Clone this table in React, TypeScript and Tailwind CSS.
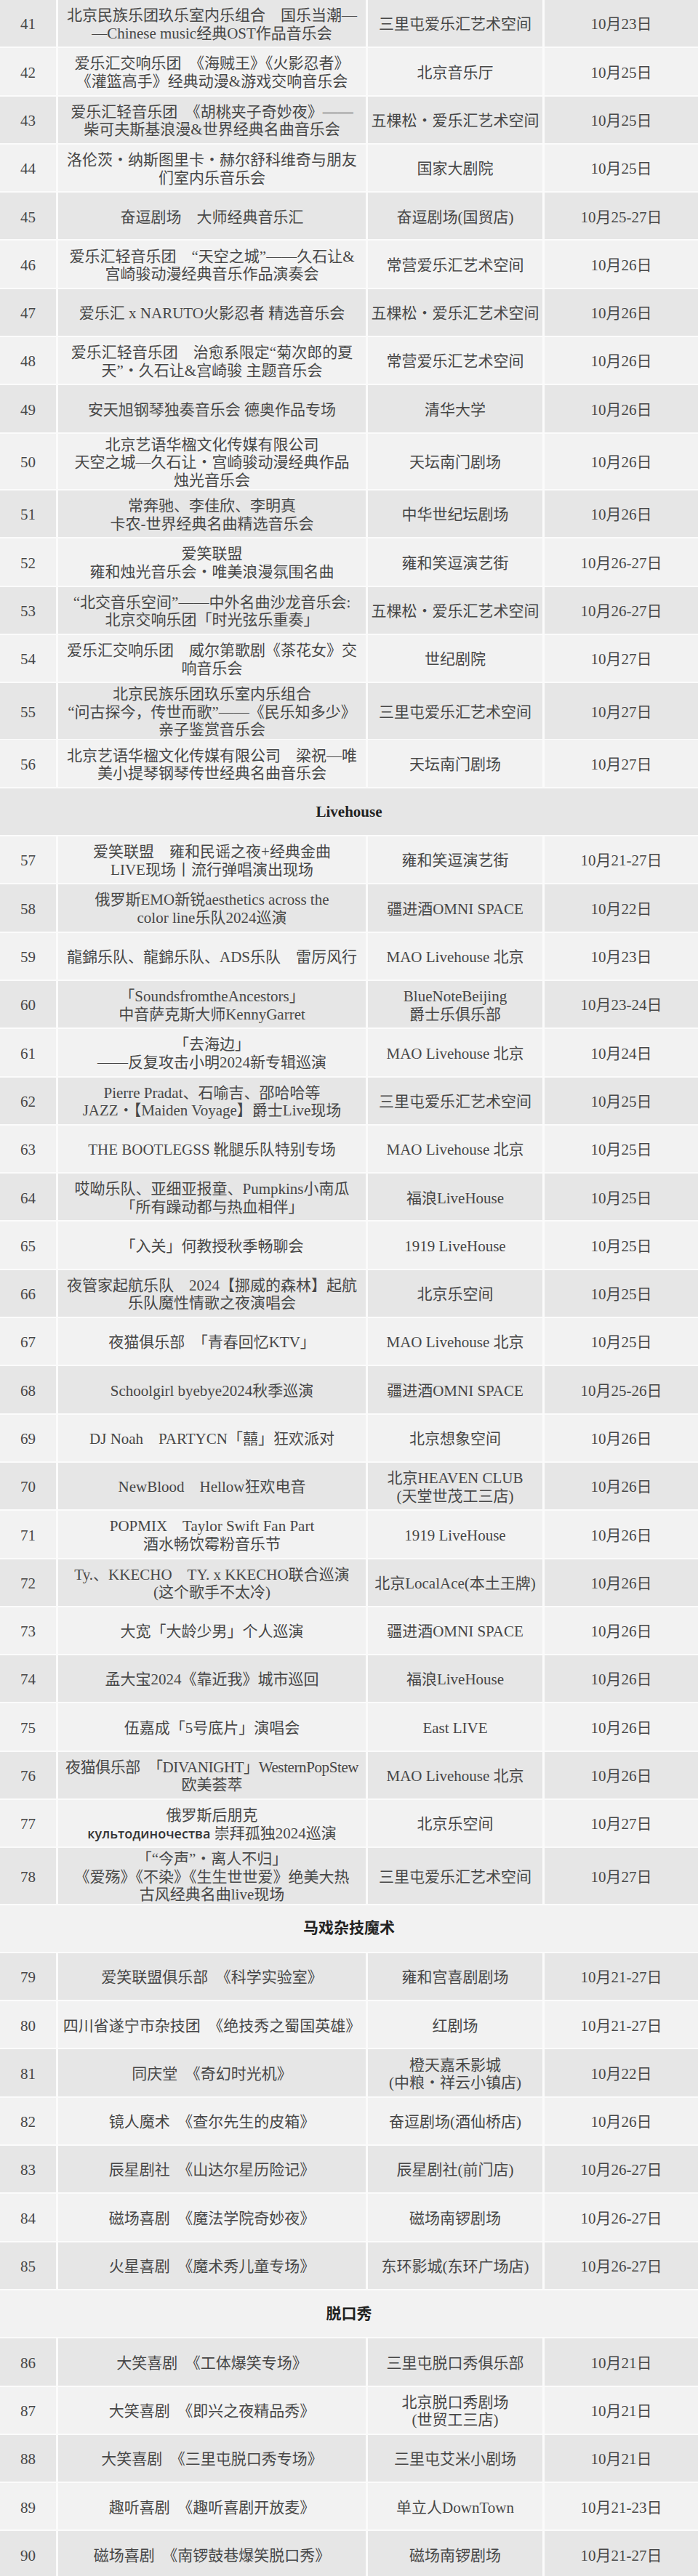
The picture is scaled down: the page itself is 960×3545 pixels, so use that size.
import type { ReactNode } from "react";

type Item =
  | { n: number; t: ReactNode[]; v: string[]; d: string }
  | { h: string };

const ITEMS: Item[] = [
  { n: 41, t: ["北京民族乐团玖乐室内乐组合　国乐当潮—", "—Chinese music经典OST作品音乐会"], v: ["三里屯爱乐汇艺术空间"], d: "10月23日" },
  { n: 42, t: ["爱乐汇交响乐团　《海贼王》《火影忍者》", "《灌篮高手》经典动漫&游戏交响音乐会"], v: ["北京音乐厅"], d: "10月25日" },
  { n: 43, t: ["爱乐汇轻音乐团　《胡桃夹子奇妙夜》——", "柴可夫斯基浪漫&世界经典名曲音乐会"], v: ["五棵松・爱乐汇艺术空间"], d: "10月25日" },
  { n: 44, t: ["洛伦茨・纳斯图里卡・赫尔舒科维奇与朋友", "们室内乐音乐会"], v: ["国家大剧院"], d: "10月25日" },
  { n: 45, t: ["奋逗剧场　大师经典音乐汇"], v: ["奋逗剧场(国贸店)"], d: "10月25-27日" },
  { n: 46, t: ["爱乐汇轻音乐团　“天空之城”——久石让&", "宫崎骏动漫经典音乐作品演奏会"], v: ["常营爱乐汇艺术空间"], d: "10月26日" },
  { n: 47, t: ["爱乐汇 x NARUTO火影忍者 精选音乐会"], v: ["五棵松・爱乐汇艺术空间"], d: "10月26日" },
  { n: 48, t: ["爱乐汇轻音乐团　治愈系限定“菊次郎的夏", "天”・久石让&宫崎骏 主题音乐会"], v: ["常营爱乐汇艺术空间"], d: "10月26日" },
  { n: 49, t: ["安天旭钢琴独奏音乐会 德奥作品专场"], v: ["清华大学"], d: "10月26日" },
  { n: 50, t: ["北京艺语华楹文化传媒有限公司", "天空之城—久石让・宫崎骏动漫经典作品", "烛光音乐会"], v: ["天坛南门剧场"], d: "10月26日" },
  { n: 51, t: ["常奔驰、李佳欣、李明真", "卡农-世界经典名曲精选音乐会"], v: ["中华世纪坛剧场"], d: "10月26日" },
  { n: 52, t: ["爱笑联盟", "雍和烛光音乐会・唯美浪漫氛围名曲"], v: ["雍和笑逗演艺街"], d: "10月26-27日" },
  { n: 53, t: ["“北交音乐空间”——中外名曲沙龙音乐会:", "北京交响乐团「时光弦乐重奏」"], v: ["五棵松・爱乐汇艺术空间"], d: "10月26-27日" },
  { n: 54, t: ["爱乐汇交响乐团　威尔第歌剧《茶花女》交", "响音乐会"], v: ["世纪剧院"], d: "10月27日" },
  { n: 55, t: ["北京民族乐团玖乐室内乐组合", "“问古探今，传世而歌”——《民乐知多少》", "亲子鉴赏音乐会"], v: ["三里屯爱乐汇艺术空间"], d: "10月27日" },
  { n: 56, t: ["北京艺语华楹文化传媒有限公司　梁祝—唯", "美小提琴钢琴传世经典名曲音乐会"], v: ["天坛南门剧场"], d: "10月27日" },
  { h: "Livehouse" },
  { n: 57, t: ["爱笑联盟　雍和民谣之夜+经典金曲", "LIVE现场丨流行弹唱演出现场"], v: ["雍和笑逗演艺街"], d: "10月21-27日" },
  { n: 58, t: ["俄罗斯EMO新锐aesthetics across the", "color line乐队2024巡演"], v: ["疆进酒OMNI SPACE"], d: "10月22日" },
  { n: 59, t: ["龍錦乐队、龍錦乐队、ADS乐队　雷厉风行"], v: ["MAO Livehouse 北京"], d: "10月23日" },
  { n: 60, t: ["「SoundsfromtheAncestors」", "中音萨克斯大师KennyGarret"], v: ["BlueNoteBeijing", "爵士乐俱乐部"], d: "10月23-24日" },
  { n: 61, t: ["「去海边」", "——反复攻击小明2024新专辑巡演"], v: ["MAO Livehouse 北京"], d: "10月24日" },
  { n: 62, t: ["Pierre Pradat、石喻吉、邵哈哈等", "JAZZ・【Maiden Voyage】爵士Live现场"], v: ["三里屯爱乐汇艺术空间"], d: "10月25日" },
  { n: 63, t: ["THE BOOTLEGSS 靴腿乐队特别专场"], v: ["MAO Livehouse 北京"], d: "10月25日" },
  { n: 64, t: ["哎呦乐队、亚细亚报童、Pumpkins小南瓜", "「所有躁动都与热血相伴」"], v: ["福浪LiveHouse"], d: "10月25日" },
  { n: 65, t: ["「入关」何教授秋季畅聊会"], v: ["1919 LiveHouse"], d: "10月25日" },
  { n: 66, t: ["夜管家起航乐队　2024【挪威的森林】起航", "乐队魔性情歌之夜演唱会"], v: ["北京乐空间"], d: "10月25日" },
  { n: 67, t: ["夜猫俱乐部　「青春回忆KTV」"], v: ["MAO Livehouse 北京"], d: "10月25日" },
  { n: 68, t: ["Schoolgirl byebye2024秋季巡演"], v: ["疆进酒OMNI SPACE"], d: "10月25-26日" },
  { n: 69, t: ["DJ Noah　PARTYCN「囍」狂欢派对"], v: ["北京想象空间"], d: "10月26日" },
  { n: 70, t: ["NewBlood　Hellow狂欢电音"], v: ["北京HEAVEN CLUB", "(天堂世茂工三店)"], d: "10月26日" },
  { n: 71, t: ["POPMIX　Taylor Swift Fan Part", "酒水畅饮霉粉音乐节"], v: ["1919 LiveHouse"], d: "10月26日" },
  { n: 72, t: ["Ty.、KKECHO　TY. x KKECHO联合巡演", "(这个歌手不太冷)"], v: ["北京LocalAce(本土王牌)"], d: "10月26日" },
  { n: 73, t: ["大宽「大龄少男」个人巡演"], v: ["疆进酒OMNI SPACE"], d: "10月26日" },
  { n: 74, t: ["孟大宝2024《靠近我》城市巡回"], v: ["福浪LiveHouse"], d: "10月26日" },
  { n: 75, t: ["伍嘉成「5号底片」演唱会"], v: ["East LIVE"], d: "10月26日" },
  { n: 76, t: [<span className="tracking-[-0.4px]">夜猫俱乐部　「DIVANIGHT」WesternPopStew</span>, "欧美荟萃"], v: ["MAO Livehouse 北京"], d: "10月26日" },
  {
    n: 77,
    t: [
      "俄罗斯后朋克",
      <>
        <span className="font-['Open_Sans','Noto_Sans',sans-serif] font-semibold text-[18px] text-[#333]">культодиночества</span> 崇拜孤独2024巡演
      </>,
    ],
    v: ["北京乐空间"],
    d: "10月27日",
  },
  { n: 78, t: ["「“今声”・离人不归」", "《爱殇》《不染》《生生世世爱》绝美大热", "古风经典名曲live现场"], v: ["三里屯爱乐汇艺术空间"], d: "10月27日" },
  { h: "马戏杂技魔术" },
  { n: 79, t: ["爱笑联盟俱乐部　《科学实验室》"], v: ["雍和宫喜剧剧场"], d: "10月21-27日" },
  { n: 80, t: ["四川省遂宁市杂技团　《绝技秀之蜀国英雄》"], v: ["红剧场"], d: "10月21-27日" },
  { n: 81, t: ["同庆堂　《奇幻时光机》"], v: ["橙天嘉禾影城", "(中粮・祥云小镇店)"], d: "10月22日" },
  { n: 82, t: ["镜人魔术　《查尔先生的皮箱》"], v: ["奋逗剧场(酒仙桥店)"], d: "10月26日" },
  { n: 83, t: ["辰星剧社　《山达尔星历险记》"], v: ["辰星剧社(前门店)"], d: "10月26-27日" },
  { n: 84, t: ["磁场喜剧　《魔法学院奇妙夜》"], v: ["磁场南锣剧场"], d: "10月26-27日" },
  { n: 85, t: ["火星喜剧　《魔术秀儿童专场》"], v: ["东环影城(东环广场店)"], d: "10月26-27日" },
  { h: "脱口秀" },
  { n: 86, t: ["大笑喜剧　《工体爆笑专场》"], v: ["三里屯脱口秀俱乐部"], d: "10月21日" },
  { n: 87, t: ["大笑喜剧　《即兴之夜精品秀》"], v: ["北京脱口秀剧场", "(世贸工三店)"], d: "10月21日" },
  { n: 88, t: ["大笑喜剧　《三里屯脱口秀专场》"], v: ["三里屯艾米小剧场"], d: "10月21日" },
  { n: 89, t: ["趣听喜剧　《趣听喜剧开放麦》"], v: ["单立人DownTown"], d: "10月21-23日" },
  { n: 90, t: ["磁场喜剧　《南锣鼓巷爆笑脱口秀》"], v: ["磁场南锣剧场"], d: "10月21-27日" },
];

function Cell({ bg, children }: { bg: string; children: ReactNode }) {
  return (
    <div className={`${bg} flex flex-col items-center justify-center text-center whitespace-nowrap pt-[3px]`}>
      {children}
    </div>
  );
}

export default function App() {
  return (
    <div className="w-[960px] bg-[#fbfbfb] flex flex-col gap-y-[2px] text-[21px] leading-[24.5px] text-[#474747] font-['Liberation_Serif','Noto_Sans_CJK_SC',serif]">
      {ITEMS.map((it, i) => {
        const bg = i % 2 === 0 ? "bg-[#e6e6e6]" : "bg-[#f2f2f2]";
        if ("h" in it) {
          return (
            <div key={i} className={`${bg} h-[64.3px] flex items-center justify-center font-bold text-[#222]`}>
              {it.h}
            </div>
          );
        }
        const tall = it.t.length === 3;
        return (
          <div
            key={i}
            className={`grid grid-cols-[77px_423px_240px_1fr] gap-x-[3px] ${tall ? "h-[76.3px]" : "h-[64.3px]"}`}
          >
            <Cell bg={bg}>{it.n}</Cell>
            <Cell bg={bg}>
              {it.t.map((line, j) => (
                <div key={j}>{line}</div>
              ))}
            </Cell>
            <Cell bg={bg}>
              {it.v.map((line, j) => (
                <div key={j}>{line}</div>
              ))}
            </Cell>
            <Cell bg={bg}>{it.d}</Cell>
          </div>
        );
      })}
    </div>
  );
}
